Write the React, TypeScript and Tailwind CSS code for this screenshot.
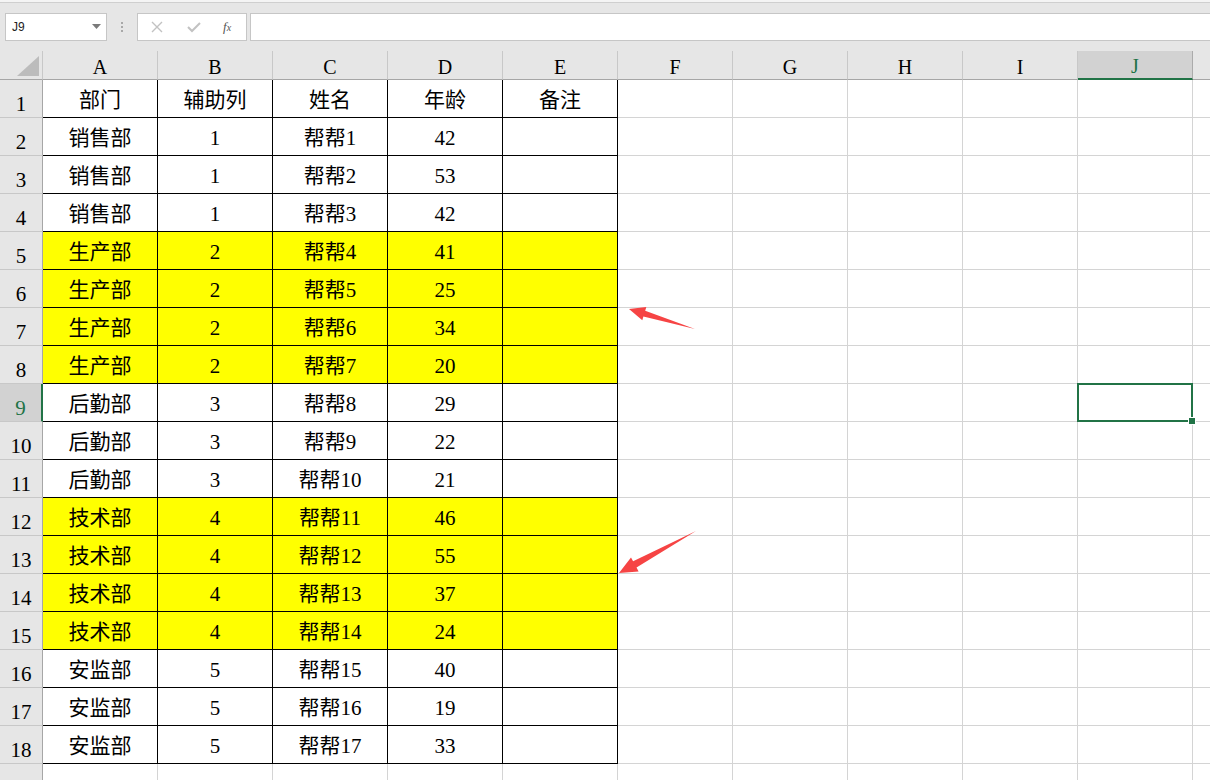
import React from 'react';

const cols = ['A', 'B', 'C', 'D', 'E', 'F', 'G', 'H', 'I', 'J'];

const data: [string, string, string, string][] = [
  ['销售部', '1', '帮帮1', '42'],
  ['销售部', '1', '帮帮2', '53'],
  ['销售部', '1', '帮帮3', '42'],
  ['生产部', '2', '帮帮4', '41'],
  ['生产部', '2', '帮帮5', '25'],
  ['生产部', '2', '帮帮6', '34'],
  ['生产部', '2', '帮帮7', '20'],
  ['后勤部', '3', '帮帮8', '29'],
  ['后勤部', '3', '帮帮9', '22'],
  ['后勤部', '3', '帮帮10', '21'],
  ['技术部', '4', '帮帮11', '46'],
  ['技术部', '4', '帮帮12', '55'],
  ['技术部', '4', '帮帮13', '37'],
  ['技术部', '4', '帮帮14', '24'],
  ['安监部', '5', '帮帮15', '40'],
  ['安监部', '5', '帮帮16', '19'],
  ['安监部', '5', '帮帮17', '33'],
];

const header = ['部门', '辅助列', '姓名', '年龄', '备注'];
const yellowRows = [5, 6, 7, 8, 12, 13, 14, 15];

function cellText(r: number, c: number) {
  if (r === 1) return header[c] ?? '';
  const row = data[r - 2];
  if (!row || c > 3) return '';
  return row[c];
}

function Row({ r }: { r: number }) {
  const selectedRow = r === 9;
  return (
    <div className="flex h-[38px] shrink-0">
      <div
        className={
          selectedRow
            ? 'w-[43px] shrink-0 flex items-end justify-center pb-0 bg-[#d2d2d2] text-[#217346] border-b border-[#c8c8c8] border-r-2 border-r-[#217346] text-[21px] leading-[26px]'
            : 'w-[43px] shrink-0 flex items-end justify-center pb-0 bg-[#e6e6e6] text-black border-b border-[#c8c8c8] border-r border-r-[#a6a6a6] text-[21px] leading-[26px]'
        }
      >
        {r}
      </div>
      {cols.map((col, c) => {
        const inData = r <= 18 && c <= 4;
        const yellow = inData && yellowRows.includes(r);
        const selected = selectedRow && col === 'J';
        return (
          <div
            key={col}
            className={
              (inData ? 'border-black ' : 'border-[#d4d4d4] ') +
              (yellow ? 'bg-[#ffff00] ' : 'bg-white ') +
              'relative w-[115px] shrink-0 border-r border-b flex items-center justify-center pt-[4px] text-[21px] text-black'
            }
          >
            {cellText(r, c)}
            {selected && (
              <>
                <div className="absolute z-10 -left-[1px] -top-[1px] w-[116px] h-[39px] border-2 border-[#217346]" />
                <div className="absolute z-20 -right-[4px] -bottom-[4px] w-[8px] h-[8px] bg-[#217346] border border-white" />
              </>
            )}
          </div>
        );
      })}
      <div className="flex-1 bg-white border-b border-[#d4d4d4]" />
    </div>
  );
}

export default function App() {
  const rows = Array.from({ length: 19 }, (_, i) => i + 1);
  return (
    <div className="relative w-[1210px] h-[780px] overflow-hidden bg-white font-['Liberation_Serif','Noto_Sans_CJK_SC',serif]">
      {/* formula bar */}
      <div className="h-[51px] bg-[#e6e6e6] border-t-[2px] border-[#f4f4f4] flex flex-col">
        <div className="h-px bg-[#cfcfcf]" />
        <div className="flex items-start pt-[10px] pl-[5px] gap-0">
          <div className="w-[102px] h-[28px] bg-white border border-[#c6c6c6] flex items-center justify-between pl-[6px] pr-[5px] font-['Liberation_Sans',sans-serif] text-[12px] text-[#222]">
            <span>J9</span>
            <svg width="9" height="6" viewBox="0 0 9 6">
              <path d="M0 0 L9 0 L4.5 5 Z" fill="#7a7a7a" />
            </svg>
          </div>
          <div className="w-[30px] h-[28px] flex flex-col items-center justify-center gap-[2px]">
            <div className="w-[2px] h-[2px] bg-[#a8a8a8]" />
            <div className="w-[2px] h-[2px] bg-[#a8a8a8]" />
            <div className="w-[2px] h-[2px] bg-[#a8a8a8]" />
          </div>
          <div className="w-[110px] h-[28px] bg-white border border-[#c6c6c6] flex items-center pl-[13px]">
            <svg width="12" height="12" viewBox="0 0 12 12">
              <path d="M1 1 L11 11 M11 1 L1 11" stroke="#c2c2c2" strokeWidth="1.4" />
            </svg>
            <svg width="14" height="12" viewBox="0 0 14 12" className="ml-[24px]">
              <path d="M1 6 L5 10 L13 2" stroke="#c2c2c2" strokeWidth="2" fill="none" />
            </svg>
            <span className="ml-[22px] text-[13px] italic text-[#555] font-['Liberation_Serif',serif]">
              f<span className="text-[10px]">x</span>
            </span>
          </div>
          <div className="ml-[3px] flex-1 h-[28px] bg-white border border-[#c6c6c6] border-r-0" />
        </div>
      </div>

      {/* column headers */}
      <div className="flex h-[29px] bg-[#e6e6e6]">
        <div className="w-[43px] shrink-0 relative border-r border-[#c8c8c8] border-b border-b-[#a6a6a6]">
          <svg width="22" height="20" viewBox="0 0 22 20" className="absolute right-[3px] bottom-[3px]">
            <path d="M22 0 L22 20 L0 20 Z" fill="#bcbcbc" />
          </svg>
        </div>
        {cols.map((col) =>
          col === 'J' ? (
            <div
              key={col}
              className="w-[115px] shrink-0 flex items-center justify-center bg-[#d2d2d2] text-[#217346] text-[20px] border-r border-[#ababab] border-b-2 border-b-[#217346] pt-[3px]"
            >
              {col}
            </div>
          ) : (
            <div
              key={col}
              className="w-[115px] shrink-0 flex items-center justify-center text-[20px] text-black border-r border-[#c8c8c8] border-b border-b-[#a6a6a6] pt-[3px]"
            >
              {col}
            </div>
          )
        )}
        <div className="flex-1 border-b border-[#a6a6a6]" />
      </div>

      {/* grid */}
      <div className="flex flex-col">
        {rows.map((r) => (
          <Row key={r} r={r} />
        ))}
      </div>

      {/* arrows */}
      <svg className="absolute left-0 top-0 pointer-events-none" width="1210" height="780">
        <polygon
          points="629,309 646.3,306.9 645.2,310.7 695,329 643.4,316.5 642.3,320.3"
          fill="#f64444"
        />
        <polygon
          points="619,573 631,557.4 633.1,561.3 696,531 636.5,567.5 638.6,571.4"
          fill="#f64444"
        />
      </svg>
    </div>
  );
}
